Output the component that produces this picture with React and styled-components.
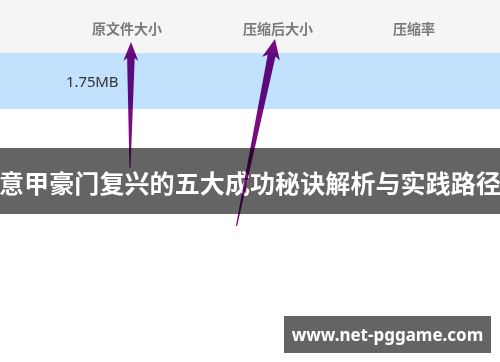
import React from 'react';
import styled, { createGlobalStyle } from 'styled-components';

const GlobalStyle = createGlobalStyle`
  html, body {
    margin: 0;
    padding: 0;
    background: #fff;
    overflow: hidden;
  }
  body {
    font-family: "Noto Sans", "Noto Sans CJK SC", sans-serif;
  }
`;

const Page = styled.div`
  position: relative;
  width: 500px;
  height: 362px;
  background: #fff;
  overflow: hidden;
`;

const HeaderRow = styled.div`
  display: flex;
  align-items: center;
  height: 53px;
  padding-left: 92px;
  background: #f5f5f5;
`;

const HeaderCell = styled.div`
  width: ${ (p) => p.width }px;
  font-family: "Noto Sans CJK SC", sans-serif;
  font-size: 14px;
  font-weight: 700;
  color: #7a7a7a;
  line-height: 1;
  padding-top: 2px;
`;

const DataRow = styled.div`
  display: flex;
  align-items: center;
  height: 56px;
  padding-left: 66px;
  background: #c2e1fc;
`;

const DataCell = styled.div`
  font-family: "Noto Sans", sans-serif;
  font-size: 15px;
  color: #333;
  letter-spacing: -0.1px;
`;

const Spacer = styled.div`
  height: 39px;
`;

const TitleBand = styled.div`
  display: flex;
  justify-content: center;
  align-items: center;
  height: 66px;
  background: #646464;
  overflow: hidden;
`;

const Title = styled.h1`
  margin: 0;
  flex-shrink: 0;
  white-space: nowrap;
  font-family: "Noto Sans CJK SC", sans-serif;
  font-size: 25px;
  font-weight: 700;
  color: #fff;
  line-height: 1;
  letter-spacing: 0.1px;
  padding-top: 3px;
`;

const Footer = styled.div`
  display: flex;
  justify-content: flex-end;
  padding: 102px 9px 0 0;
`;

const Badge = styled.div`
  display: flex;
  align-items: center;
  justify-content: center;
  width: 207px;
  height: 37px;
  background: #646464;
  font-family: "Noto Sans", sans-serif;
  font-size: 17px;
  font-weight: 700;
  color: #fff;
`;

const Overlay = styled.svg`
  position: absolute;
  left: 0;
  top: 0;
  pointer-events: none;
  mix-blend-mode: multiply;
`;

// arrow polygon from tip to tail, tapering shaft
const arrowPoints = (tip, tail, headLen, headHalf, shaftTop, shaftBottom) => {
  const dx = tail[0] - tip[0];
  const dy = tail[1] - tip[1];
  const len = Math.hypot(dx, dy);
  const u = [dx / len, dy / len];
  const n = [-u[1], u[0]];
  const at = (d, w) => [tip[0] + u[0] * d + n[0] * w, tip[1] + u[1] * d + n[1] * w];
  const pts = [
    tip,
    at(headLen, headHalf),
    at(headLen - 3, shaftTop),
    at(len, shaftBottom),
    at(len, -shaftBottom),
    at(headLen - 3, -shaftTop),
    at(headLen, -headHalf)
  ];
  return pts.map((p) => p.map((v) => v.toFixed(1)).join(',')).join(' ');
};

const ARROWS = [
  { tip: [131, 42], tail: [130, 168], headLen: 19, headHalf: 7.5, shaftTop: 3.8, shaftBottom: 0.5 },
  { tip: [275, 39], tail: [236.5, 226], headLen: 20, headHalf: 9, shaftTop: 4, shaftBottom: 0.6 }
];

export default function App() {
  return (
    <Page>
      <GlobalStyle />
      <HeaderRow>
        <HeaderCell width={ 151 }>原文件大小</HeaderCell>
        <HeaderCell width={ 150 }>压缩后大小</HeaderCell>
        <HeaderCell width={ 100 }>压缩率</HeaderCell>
      </HeaderRow>
      <DataRow>
        <DataCell>1.75MB</DataCell>
      </DataRow>
      <Spacer />
      <TitleBand>
        <Title>意甲豪门复兴的五大成功秘诀解析与实践路径</Title>
      </TitleBand>
      <Footer>
        <Badge>www.net-pggame.com</Badge>
      </Footer>
      <Overlay width='500' height='362' viewBox='0 0 500 362'>
        { ARROWS.map((a, i) => (
          <polygon
            key={ i }
            points={ arrowPoints(a.tip, a.tail, a.headLen, a.headHalf, a.shaftTop, a.shaftBottom) }
            fill='#7a0a80'
          />
        )) }
      </Overlay>
    </Page>
  );
}
